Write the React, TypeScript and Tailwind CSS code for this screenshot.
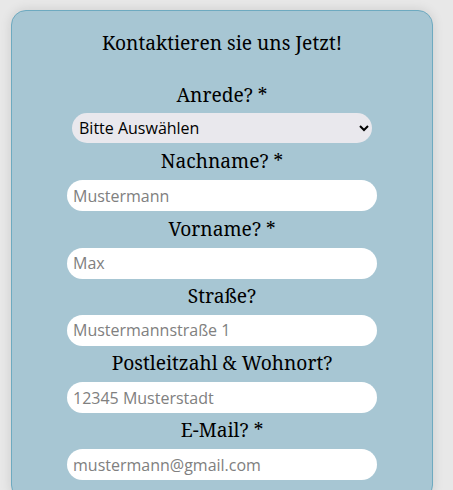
import React from "react";

const Field = ({
  label,
  placeholder,
  type = "text",
}: {
  label: string;
  placeholder: string;
  type?: string;
}) => {
  return (
    <div className="flex flex-col items-center mt-[3.25px]">
      <label className="text-[19.2px] leading-[28px] text-black">{label}</label>
      <input
        className="mt-[5px] w-[310px] h-[31px] rounded-full bg-white px-[6px] text-[16px] text-black placeholder:text-[#808080] outline-none"
        style={{ fontFamily: '"Open Sans", sans-serif' }}
        type={type}
        placeholder={placeholder}
      />
    </div>
  );
};

const App = () => {
  return (
    <div className="min-h-screen bg-[#e8e8e8] pt-[10px] pl-[11px]">
      <div
        className="w-[422px] min-h-[490px] bg-[#a7c6d3] border border-[#6eaac0] rounded-[15px] shadow-[0_0_12px_rgba(0,0,0,0.12)] pt-[18px] flex flex-col items-center"
        style={{ fontFamily: '"Noto Serif", "DejaVu Serif", serif' }}
      >
        <h1 className="text-[19.2px] leading-[28px] text-black">
          Kontaktieren sie uns Jetzt!
        </h1>
        <div className="flex flex-col items-center mt-[24px] mb-[1px]">
          <label className="text-[19.2px] leading-[28px] text-black">
            Anrede? *
          </label>
          <select
            className="mt-[4px] w-[300px] h-[30px] rounded-full bg-[#e9e8ed] pl-[3px] pr-[4px] text-[16px] text-black outline-none"
            style={{ fontFamily: '"Open Sans", sans-serif' }}
            defaultValue=""
          >
            <option value="">Bitte Auswählen</option>
            <option value="herr">Herr</option>
            <option value="frau">Frau</option>
            <option value="divers">Divers</option>
          </select>
        </div>
        <Field label="Nachname? *" placeholder="Mustermann" />
        <Field label="Vorname? *" placeholder="Max" />
        <Field label="Straße?" placeholder="Mustermannstraße 1" />
        <Field label="Postleitzahl & Wohnort?" placeholder="12345 Musterstadt" />
        <Field label="E-Mail? *" placeholder="mustermann@gmail.com" type="email" />
      </div>
    </div>
  );
};

export default App;
